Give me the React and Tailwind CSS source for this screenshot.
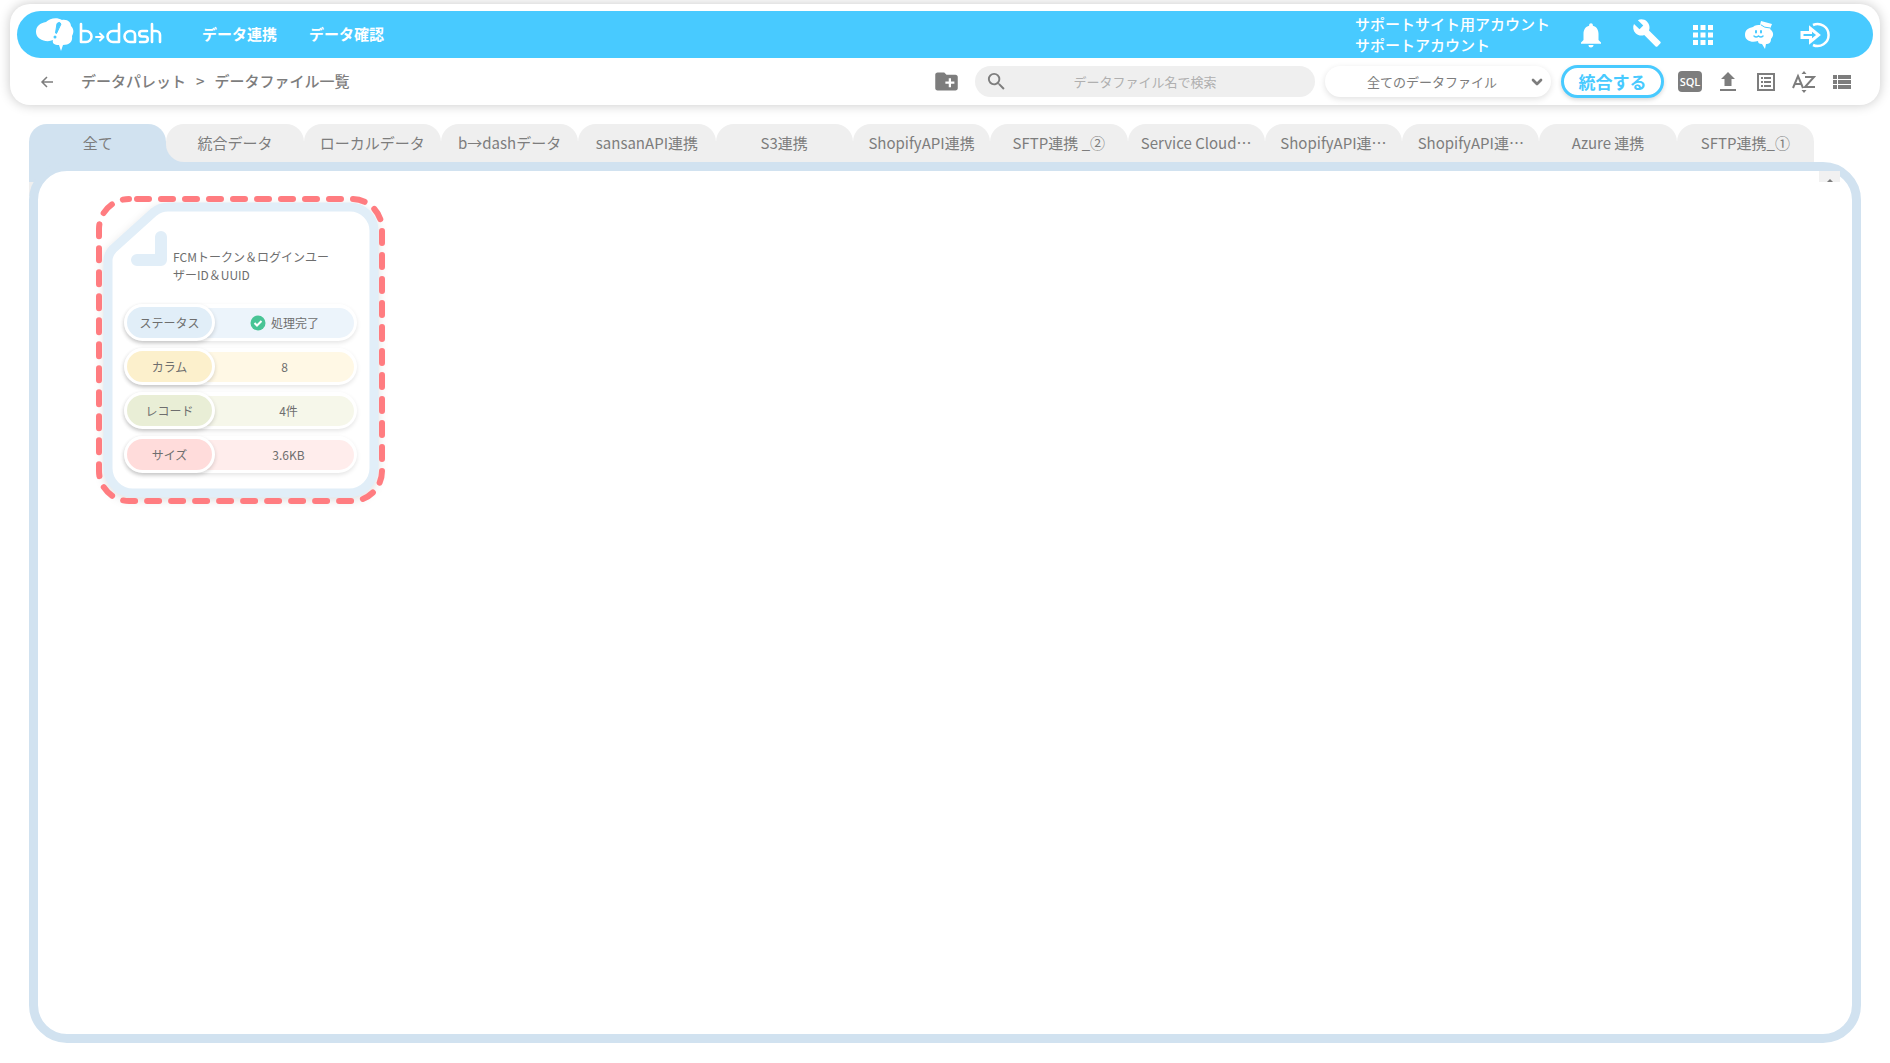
import { useState } from "react";
import { MdCreateNewFolder, MdSearch, MdNotifications, MdApps } from "react-icons/md";
import { FiChevronDown } from "react-icons/fi";

const TABS = [
  "全て",
  "統合データ",
  "ローカルデータ",
  "b→dashデータ",
  "sansanAPI連携",
  "S3連携",
  "ShopifyAPI連携",
  "SFTP連携 _②",
  "Service Cloud⋯",
  "ShopifyAPI連⋯",
  "ShopifyAPI連⋯",
  "Azure 連携",
  "SFTP連携_①",
];

const ROWS = [
  { label: "ステータス", value: "処理完了", done: true, tag: "bg-[#e1eef8]", bar: "bg-[#ecf4fb] pl-5" },
  { label: "カラム", value: "8", tag: "bg-[#fcf0cc]", bar: "bg-[#fff8e5] pl-5" },
  { label: "レコード", value: "4件", tag: "bg-[#e9eed6]", bar: "bg-[#f6f7ea] pl-7" },
  { label: "サイズ", value: "3.6KB", tag: "bg-[#ffdcdb]", bar: "bg-[#ffedec] pl-7" },
];

const Logo = () => (
  <a href="#" aria-label="b→dash" className="block h-9 w-32">
    <svg viewBox="0 0 128 36" className="h-9 w-32" fill="none">
      <path
        d="M1 15C1 9 5 6 11 5C15 1 22 0 27 3C33 2 36 6 36 9C40 13 38 17 37 19C38 25 34 28 28 28L26 34L24 28C19 28 17 26 18 23C12 26 1 23 1 15Z"
        fill="#fff"
      />
      <path d="M22 6.500Q25 4 26 7L21.500 16.500L20.500 16Z" fill="#48caff" stroke="#48caff" strokeLinejoin="round" />
      <circle cx="20" cy="20" r="1.500" fill="#48caff" />
      <g stroke="#fff" strokeWidth="2.600" strokeLinecap="round" strokeLinejoin="round">
        <path d="M46 7V25H51A5 5 0 0 0 51 14H46" />
        <path d="M61 20H67M65 16.500L68.500 20L65 23.500" strokeWidth="2" />
        <path d="M84 7V25H78A5 5 0 0 1 78 14H84" />
        <path d="M100 25H95A5 5 0 0 1 95 14H96A4 4 0 0 1 100 18V25" />
        <path d="M112 14H107A2.700 2.700 0 0 0 107 19.500H110A2.700 2.700 0 0 1 110 25H105" />
        <path d="M117 7V25M117 14H121A4 4 0 0 1 125 18V25" />
      </g>
    </svg>
  </a>
);

const Mascot = () => (
  <svg viewBox="0 0 30 30" className="h-[30px] w-[30px]">
    <path
      d="M1 15C1 10 4 8 9 7C11 5 14 5 16 5L17 1L28 4L26 9C30 12 30 16 27 19C27 23 25 24 22 24L21 29L18 24C15 24 14 23 14 21C8 23 1 21 1 15Z"
      fill="#fff"
    />
    <g stroke="#48caff" fill="none" strokeLinecap="round">
      <path d="M12 11V12.500M17 11V12.500" strokeWidth="2" />
      <path d="M10 16Q12 18 14.500 16Q17 18 19 16" strokeWidth="1.500" />
      <path d="M17 5Q20 8 26 8" />
    </g>
  </svg>
);

const Logout = () => (
  <svg viewBox="0 0 30 26" className="h-[26px] w-[30px]" fill="none" stroke="#fff">
    <path d="M13 3A11 11 0 1 1 13 23" strokeWidth="2.500" />
    <path d="M2 10.500H10.500V6.500L18.500 13L10.500 19.500V15.500H2Z" strokeWidth="3" />
  </svg>
);

const Header = () => (
  <div className="flex h-[47px] items-center rounded-full bg-[#48caff] pr-[43px] pl-[18px] text-white">
    <Logo />
    <nav className="ml-[39px] flex gap-8 text-[15px] font-bold">
      <a href="#">データ連携</a>
      <a href="#">データ確認</a>
    </nav>
    <div className="ml-auto pb-[2px] text-[15px] leading-[21px] font-medium">
      <p>サポートサイト用アカウント</p>
      <p>サポートアカウント</p>
    </div>
    <div className="ml-[26px] flex items-center gap-[26px]">
      <button aria-label="お知らせ">
        <MdNotifications className="h-[30px] w-[30px]" />
      </button>
      <button aria-label="設定">
        <svg viewBox="0 0 24 24" className="mb-1 h-[30px] w-[30px]" fill="currentColor">
          <path d="m22.700 19-9.100-9.100c.9-2.300.4-5-1.500-6.900-2-2-5-2.400-7.400-1.300L9 6 6 9 1.600 4.700C.4 7.100.9 10.100 2.900 12.100c1.900 1.900 4.600 2.400 6.900 1.500l9.100 9.100c.4.4 1 .4 1.400 0l2.300-2.300c.5-.4.5-1.100.1-1.400z" />
        </svg>
      </button>
      <button aria-label="アプリ一覧">
        <MdApps className="h-[30px] w-[30px]" />
      </button>
      <button aria-label="ヘルプ">
        <Mascot />
      </button>
      <button aria-label="ログアウト">
        <Logout />
      </button>
    </div>
  </div>
);

const Toolbar = () => {
  const [keyword, setKeyword] = useState("");

  return (
    <div className="flex h-[47px] items-center pr-[19px] pl-[22px] text-[#7d7d7d]">
      <button aria-label="戻る">
        <svg viewBox="0 0 16 16" className="h-4 w-4" fill="none" stroke="currentColor" strokeWidth="1.500">
          <path d="M14 8H3M8 3L3 8L8 13" />
        </svg>
      </button>
      <div className="ml-[26px] flex gap-[10px] text-[15px] font-medium">
        <a href="#">データパレット</a>
        <span>&gt;</span>
        <span>データファイル一覧</span>
      </div>
      <button aria-label="フォルダ作成" className="ml-auto">
        <MdCreateNewFolder className="h-[27px] w-[27px]" />
      </button>
      <label className="ml-[15px] flex h-[31px] w-[340px] items-center rounded-full bg-[#efefef] px-[10px]">
        <MdSearch className="h-[23px] w-[23px]" />
        <input
          aria-label="データファイル名で検索"
          className="min-w-0 flex-1 bg-transparent pr-[23px] text-center text-[13px] placeholder-[#b0b0b0] outline-none"
          placeholder="データファイル名で検索"
          value={keyword}
          onChange={(e) => setKeyword(e.target.value)}
        />
      </label>
      <div className="relative ml-[10px] w-[226px]">
        <select
          aria-label="表示するデータファイル"
          className="h-[31px] w-full appearance-none rounded-full bg-white pl-[42px] text-[13px] shadow-[0_2px_6px_rgba(0,0,0,0.12)]"
        >
          <option>全てのデータファイル</option>
        </select>
        <FiChevronDown className="pointer-events-none absolute top-2 right-[6px] h-4 w-4 stroke-[4]" />
      </div>
      <button className="ml-[10px] h-[33px] w-[103px] rounded-full border-[3px] border-[#48caff] bg-white text-[17px] leading-[26px] font-bold text-[#48caff] shadow-[0_2px_4px_rgba(0,0,0,0.15)]">
        統合する
      </button>
      <div className="ml-[14px] flex items-center gap-[14px]">
        <button className="h-[21px] w-6 rounded bg-[#7d7d7d] font-['Open_Sans'] text-[11px] leading-[21px] font-semibold text-white">
          SQL
        </button>
        <button aria-label="アップロード" className="flex w-6 justify-center">
          <svg viewBox="0 0 20 20" className="h-5 w-5" fill="currentColor">
            <path d="M10 0L17 7H13.500V14H6.500V7H3ZM2 17H18V19H2Z" />
          </svg>
        </button>
        <button aria-label="詳細" className="flex w-6 justify-center">
          <svg viewBox="0 0 18 18" className="h-[18px] w-[18px]" fill="currentColor">
            <path fillRule="evenodd" d="M0 0H18V18H0ZM2 2V16H16V2ZM4 4H6V6H4ZM7 4H14V6H7ZM4 8H6V10H4ZM7 8H14V10H7ZM4 12H6V14H4ZM7 12H14V14H7Z" />
          </svg>
        </button>
        <button aria-label="並べ替え" className="flex w-6 justify-center">
          <svg viewBox="0 0 24 22" className="h-[22px] w-6" fill="none" stroke="currentColor" strokeWidth="2">
            <path d="M1 17L6 5L11 17M3 13H9M13 6H22L13 16H23" />
            <path d="M9.500 3L12 0L14.500 3ZM9.500 19L12 22L14.500 19Z" fill="currentColor" stroke="none" />
          </svg>
        </button>
        <button aria-label="リスト表示" className="flex w-6 justify-center">
          <svg viewBox="0 0 18 14" className="h-[14px] w-[18px]" fill="currentColor">
            <path d="M0 0H4V4H0ZM5 0H18V4H5ZM0 5H4V9H0ZM5 5H18V9H5ZM0 10H4V14H0ZM5 10H18V14H5Z" />
          </svg>
        </button>
      </div>
    </div>
  );
};

const FileCard = () => (
  <article className="relative h-[308px] w-[289px] px-[28px] pt-[52px] text-[12px] text-[#6e6e6e]">
    <svg viewBox="0 0 289 308" className="absolute inset-0 h-full w-full overflow-visible" fill="none">
      <path
        d="M12 65Q12 58 17 53L58 16Q64 11 72 11H254A24 24 0 0 1 278 35V272A25 25 0 0 1 253 297H37A25 25 0 0 1 12 272Z"
        fill="#fff"
        stroke="#e1eef8"
        strokeWidth="9"
        className="drop-shadow-[0_3px_5px_rgba(0,0,0,0.12)]"
      />
      <path d="M41 64H65V41" stroke="#e1eef8" strokeWidth="12" strokeLinecap="round" strokeLinejoin="round" />
      <rect x="3" y="3" width="283" height="302" rx="30" stroke="#ff7c80" strokeWidth="6" strokeDasharray="12 12" strokeDashoffset="16" strokeLinecap="round" />
    </svg>
    <h2 className="relative mb-[20px] ml-[49px] w-[165px] leading-[18px]">FCMトークン＆ログインユーザーID＆UUID</h2>
    <dl className="relative flex flex-col gap-[7px]">
      {ROWS.map((row) => (
        <div key={row.label} className="flex h-[37px] items-center rounded-full bg-white shadow-[0_2px_4px_rgba(0,0,0,0.1)]">
          <dt
            className={`z-10 flex h-[37px] w-[91px] items-center justify-center rounded-full border-[3px] border-white shadow-[0_2px_4px_rgba(0,0,0,0.16)] ${row.tag}`}
          >
            {row.label}
          </dt>
          <dd className={`mr-[3px] -ml-5 flex h-[30px] flex-1 items-center justify-center gap-[5px] rounded-r-full ${row.bar}`}>
            {row.done && (
              <svg viewBox="0 0 16 16" className="h-4 w-4" fill="none">
                <circle cx="8" cy="8" r="7.500" fill="#48c495" />
                <path d="M4.500 8L7 10.500L11.500 6" stroke="#fff" strokeWidth="2" />
              </svg>
            )}
            {row.value}
          </dd>
        </div>
      ))}
    </dl>
  </article>
);

export default function App() {
  const [active, setActive] = useState(0);

  const tabShape = (i) => {
    if (i === active) return "rounded-t-[18px] bg-[#d1e2f0]";
    if (i === active + 1) return "rounded-t-[18px] rounded-bl-[18px] bg-[#efefef]";
    return "rounded-t-[18px] bg-[#efefef]";
  };

  return (
    <div lang="ja" className="flex min-h-screen flex-col bg-white px-[10px] pt-1 pb-5 font-['Noto_Sans_CJK_JP',sans-serif]">
      <header className="rounded-[20px] bg-white px-[7px] pt-[7px] shadow-[0_0_12px_rgba(0,0,0,0.22)]">
        <Header />
        <Toolbar />
      </header>
      <main className="mt-[19px] flex flex-1 flex-col px-[19px]">
        <div role="tablist" className="mr-[47px] flex h-[38px] text-[15px] text-[#7d7d7d]">
          {TABS.map((tab, i) => (
            <div
              key={i}
              className={`flex-1 ${i === active + 1 ? "bg-linear-to-b from-white from-50% to-[#d1e2f0] to-50%" : ""}`}
            >
              <button
                role="tab"
                aria-selected={i === active}
                onClick={() => setActive(i)}
                className={`h-full w-full whitespace-nowrap ${tabShape(i)}`}
              >
                {tab}
              </button>
            </div>
          ))}
        </div>
        <div className="relative flex flex-1 flex-col">
          {/* strip that joins the active tab to the panel */}
          <div className="absolute top-0 left-0 h-[34px] w-[38px] bg-[#efefef]">
            <div className="h-5 bg-[#d1e2f0]" />
          </div>
          <section className="relative flex-1 rounded-[38px] border-[9px] border-[#d1e2f0] bg-white pt-[25px] pl-[58px]">
            <FileCard />
          </section>
          <div className="absolute top-[9px] right-[21px] flex h-[11px] w-[21px] items-end justify-center overflow-hidden bg-[#f1f1f1]">
            <svg viewBox="0 0 6 3" className="h-[3px] w-[6px]" fill="#7d7d7d">
              <path d="M0 3L3 0L6 3Z" />
            </svg>
          </div>
        </div>
      </main>
    </div>
  );
}
